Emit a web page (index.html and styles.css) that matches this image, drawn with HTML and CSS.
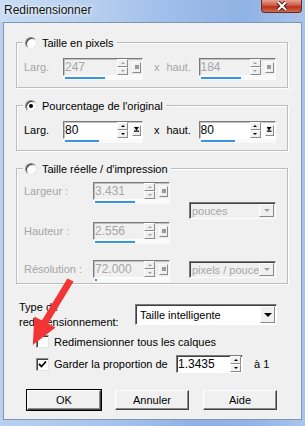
FILE: index.html
```html
<!DOCTYPE html>
<html lang="fr">
<head>
  <meta charset="UTF-8">
  <meta name="viewport" content="width=device-width, initial-scale=1">
  <title>Redimensionner</title>
  <link rel="stylesheet" href="styles.css">
</head>
<body>

<div class="window">
  <div class="titlebar">
    <span class="title">Redimensionner</span>
    <span class="close">
      <svg width="14" height="10" viewBox="0 0 14 10">
        <path d="M3 1 L11 9 M11 1 L3 9" stroke="#4a1a1a" stroke-width="4"/>
        <path d="M3 1 L11 9 M11 1 L3 9" stroke="#fff" stroke-width="2"/>
      </svg>
    </span>
  </div>

  <div class="client">

    <div class="group off">
      <div class="legend"><span class="radio"></span>Taille en pixels</div>
      <div class="row">
        <span class="lbl">Larg.</span>
        <div class="numedit">
          <div class="ne-box">
            <span class="ne-val">247</span>
            <span class="spin"><span class="up"></span><span class="dn"></span></span>
            <span class="pop"></span>
          </div>
          <div class="ne-bar"><span class="fill" style="width:40px"></span></div>
        </div>
        <span class="times">x</span>
        <span class="lbl2">haut.</span>
        <div class="numedit short">
          <div class="ne-box">
            <span class="ne-val">184</span>
            <span class="spin"><span class="up"></span><span class="dn"></span></span>
            <span class="pop"></span>
          </div>
          <div class="ne-bar"><span class="fill" style="width:40px"></span></div>
        </div>
      </div>
    </div>

    <div class="group">
      <div class="legend"><span class="radio on"></span>Pourcentage de l'original</div>
      <div class="row">
        <span class="lbl">Larg.</span>
        <div class="numedit">
          <div class="ne-box">
            <span class="ne-val">80</span>
            <span class="spin"><span class="up"></span><span class="dn"></span></span>
            <span class="pop"></span>
          </div>
          <div class="ne-bar"><span class="fill" style="width:34px"></span></div>
        </div>
        <span class="times">x</span>
        <span class="lbl2">haut.</span>
        <div class="numedit short">
          <div class="ne-box">
            <span class="ne-val">80</span>
            <span class="spin"><span class="up"></span><span class="dn"></span></span>
            <span class="pop"></span>
          </div>
          <div class="ne-bar"><span class="fill" style="width:34px"></span></div>
        </div>
      </div>
    </div>

    <div class="group off last">
      <div class="legend"><span class="radio"></span>Taille réelle / d'impression</div>
      <div class="grid">
        <span class="lbl r1">Largeur :</span>
        <div class="numedit mid r1">
          <div class="ne-box">
            <span class="ne-val">3.431</span>
            <span class="spin"><span class="up"></span><span class="dn"></span></span>
            <span class="pop"></span>
          </div>
          <div class="ne-bar"><span class="fill" style="width:40px"></span></div>
        </div>
        <div class="combo r2">
          <span class="combo-val">pouces</span>
          <span class="combo-btn"><span class="tri"></span></span>
        </div>
        <span class="lbl r3">Hauteur :</span>
        <div class="numedit mid r3">
          <div class="ne-box">
            <span class="ne-val">2.556</span>
            <span class="spin"><span class="up"></span><span class="dn"></span></span>
            <span class="pop"></span>
          </div>
          <div class="ne-bar"><span class="fill" style="width:40px"></span></div>
        </div>
        <span class="lbl r4">Résolution :</span>
        <div class="numedit mid r4">
          <div class="ne-box">
            <span class="ne-val">72.000</span>
            <span class="spin"><span class="up"></span><span class="dn"></span></span>
            <span class="pop"></span>
          </div>
          <div class="ne-bar"><span class="fill" style="width:2px"></span></div>
        </div>
        <div class="combo r4">
          <span class="combo-val">pixels / pouce</span>
          <span class="combo-btn"><span class="tri"></span></span>
        </div>
      </div>
    </div>

    <div class="type-row">
      <span class="type-lbl">Type de redimensionnement:</span>
      <div class="combo big">
        <span class="combo-val">Taille intelligente</span>
        <span class="combo-btn"><span class="tri"></span></span>
      </div>
    </div>

    <div class="check-row">
      <span class="check"></span>
      <span>Redimensionner tous les calques</span>
    </div>

    <div class="check-row ratio">
      <span class="check">
        <svg width="9" height="9" viewBox="0 0 9 9"><path d="M1 4 L3.5 6.5 L8 1.5" fill="none" stroke="#000" stroke-width="1.8"/></svg>
      </span>
      <span class="ratio-lbl">Garder la proportion de</span>
      <div class="ratio-box">
        <span class="ne-val">1.3435</span>
        <span class="spin"><span class="up"></span><span class="dn"></span></span>
      </div>
      <span class="ratio-end">à 1</span>
    </div>

    <div class="buttons">
      <span class="btn default">OK</span>
      <span class="btn">Annuler</span>
      <span class="btn">Aide</span>
    </div>

  </div>

  <svg class="arrow" width="52" height="74" viewBox="25 278 52 74">
    <polygon points="67.4,278.4 73.6,281.6 48.1,323.6 55.6,327.6 32.8,344.9 34.4,316.4 41.9,320.4" fill="#f23434"/>
  </svg>
</div>

</body>
</html>
```

FILE: styles.css
```css
* {
  box-sizing: border-box;
}
body {
  margin: 0;
  width: 305px;
  height: 426px;
  overflow: hidden;
  font-family: "Liberation Sans", Arial, sans-serif;
  font-size: 11px;
  color: #000;
}
.window {
  position: relative;
  width: 305px;
  height: 426px;
  display: flex;
  flex-direction: column;
  padding: 0 3px 6px 3px;
  background: linear-gradient(90deg, #b9d0ef 0%, #a8c4eb 35%, #8fb1e3 65%, #94b6e6 85%, #a9c5ec 100%);
}
.titlebar {
  height: 22px;
  display: flex;
  align-items: flex-start;
  background: linear-gradient(90deg, #c9dcf4 0%, #b7cfef 30%, #9bbbe8 60%, #90b2e4 80%, #a8c4ea 100%);
  margin: 0 -3px;
  padding: 0 3px;
}
.title {
  font-size: 12px;
  line-height: 14px;
  margin: 3px 0 0 1px;
  color: #111;
  text-shadow: 0 0 5px #eef4fc, 0 0 3px #eef4fc;
}
.close {
  margin-left: auto;
  width: 41px;
  height: 13px;
  display: flex;
  align-items: center;
  justify-content: center;
  border: 1px solid #6d2a24;
  border-top: none;
  border-radius: 0 0 4px 4px;
  background: linear-gradient(180deg, #e3a394 0%, #cf5a43 45%, #b8321c 55%, #cf6a4c 100%);
}
.client {
  flex: 1;
  background: #f0f0f0;
  border: 1px solid #7f95b4;
  padding: 0 13px 0 12px;
}

/* group boxes */
.group {
  width: 272px;
  margin-top: 17px;
  border: 1px solid #bcbcbc;
  box-shadow: inset 1px 1px 0 #fff, 1px 1px 0 #fff;
  padding-bottom: 7px;
}
.group:first-child {
  margin-top: 19px;
}
.group.last {
  padding-bottom: 0;
}
.legend {
  display: flex;
  align-items: center;
  width: fit-content;
  height: 15px;
  margin: -8px 0 0 6px;
  padding: 0 3px 0 2px;
  background: #f0f0f0;
}
.radio {
  width: 12px;
  height: 12px;
  margin-right: 5px;
  border-radius: 50%;
  background: #fff;
  border: 1px solid;
  border-color: #8a8a8a #e6e6e6 #e6e6e6 #8a8a8a;
  box-shadow: inset 1px 1px 0 #3c3c3c;
  display: flex;
  align-items: center;
  justify-content: center;
}
.radio.on::after {
  content: "";
  width: 4px;
  height: 4px;
  border-radius: 50%;
  background: #000;
}
.row {
  display: flex;
  align-items: flex-start;
  margin: 8px 0 0 7px;
  height: 22px;
}
.lbl {
  width: 39px;
  line-height: 18px;
}
.times {
  line-height: 18px;
  margin: 0 7px 0 11px;
}
.lbl2 {
  width: 32px;
  line-height: 18px;
}
.off .lbl,
.off .lbl2,
.off .times,
.off .ne-val,
.off .combo-val {
  color: #a6a6a6;
}

/* numeric edit with slider */
.numedit {
  width: 80px;
}
.numedit.short {
  width: 77px;
}
.numedit.mid {
  width: 77px;
}
.ne-box {
  height: 18px;
  display: flex;
  align-items: center;
  background: #fff;
  border: 1px solid;
  border-color: #7a7a7a #fff #fff #7a7a7a;
  box-shadow: inset 1px 1px 0 #c0c0c0;
}
.off .ne-box {
  background: #f0f0f0;
}
.ne-val {
  flex: 1;
  font-size: 12px;
  padding-left: 1px;
}
.spin {
  width: 11px;
  height: 16px;
  display: flex;
  flex-direction: column;
}
.spin span {
  flex: 1;
  display: flex;
  align-items: center;
  justify-content: center;
  background: #f0f0f0;
  border: 1px solid;
  border-color: #fff #8a8a8a #8a8a8a #fff;
}
.spin .up::after {
  content: "";
  border-left: 2px solid transparent;
  border-right: 2px solid transparent;
  border-bottom: 2px solid #000;
}
.spin .dn::after {
  content: "";
  border-left: 2px solid transparent;
  border-right: 2px solid transparent;
  border-top: 2px solid #000;
}
.off .spin .up::after {
  border-bottom-color: #a0a0a0;
}
.off .spin .dn::after {
  border-top-color: #a0a0a0;
}
.pop {
  width: 9px;
  height: 11px;
  margin: 0 1px 0 4px;
  display: flex;
  align-items: center;
  justify-content: center;
  background: #f0f0f0;
  border: 1px solid;
  border-color: #fff #8a8a8a #8a8a8a #fff;
}
.pop::after {
  content: "";
  width: 5px;
  height: 6px;
  background: #000;
  clip-path: polygon(0 0, 100% 0, 50% 60%, 100% 60%, 100% 80%, 0 80%, 0 60%, 50% 60%);
}
.off .pop::after {
  width: 4px;
  height: 4px;
  background: #9a9a9a;
  clip-path: none;
}
.ne-bar {
  height: 4px;
  background: #fafafa;
  padding: 1px 0 0 2px;
}
.fill {
  display: block;
  height: 2px;
  background: #3b93e6;
}

/* real size grid */
.grid {
  display: grid;
  grid-template-columns: 69px 77px 19px 87px;
  grid-template-rows: 20px 20px 38px 23px;
  margin: 6px 0 0 7px;
}
.grid .lbl {
  width: auto;
}
.r1 { grid-row: 1; }
.r2 { grid-row: 2; grid-column: 4; }
.r3 { grid-row: 3; }
.r4 { grid-row: 4; }
.grid .combo.r4 {
  grid-column: 4;
  margin-top: 1px;
}

/* combo boxes */
.combo {
  width: 87px;
  height: 17px;
  display: flex;
  align-items: center;
  border: 1px solid;
  border-color: #7a7a7a #fff #fff #7a7a7a;
  box-shadow: inset 1px 1px 0 #404040;
  background: #f0f0f0;
}
.combo-val {
  flex: 1;
  overflow: hidden;
  white-space: nowrap;
  padding-left: 2px;
}
.combo-btn {
  width: 15px;
  height: 13px;
  margin-right: 1px;
  display: flex;
  align-items: center;
  justify-content: center;
  background: #f0f0f0;
  border: 1px solid;
  border-color: #fff #8a8a8a #8a8a8a #fff;
}
.tri {
  border-left: 3px solid transparent;
  border-right: 3px solid transparent;
  border-top: 3px solid #a0a0a0;
}

/* resize type */
.type-row {
  display: flex;
  align-items: flex-start;
  margin: 16px 0 0 3px;
}
.type-lbl {
  width: 116px;
  line-height: 15px;
}
.combo.big {
  width: 142px;
  height: 21px;
  margin-top: 4px;
  background: #fff;
}
.big .combo-val {
  padding-left: 4px;
}
.big .combo-btn {
  height: 17px;
}
.big .tri {
  border-left-width: 4px;
  border-right-width: 4px;
  border-top: 4px solid #000;
}

/* check boxes */
.check-row {
  display: flex;
  align-items: center;
  margin: 5px 0 0 20px;
  height: 13px;
}
.check {
  width: 13px;
  height: 13px;
  margin-right: 5px;
  background: #fff;
  border: 1px solid;
  border-color: #8a8a8a #e6e6e6 #e6e6e6 #8a8a8a;
  box-shadow: inset 1px 1px 0 #404040;
  display: flex;
  align-items: center;
  justify-content: center;
}
.check-row.ratio {
  height: 18px;
  margin-top: 7px;
}
.ratio-lbl {
  width: 122px;
}
.ratio-box {
  width: 67px;
  height: 18px;
  display: flex;
  align-items: center;
  background: #fff;
  border: 1px solid;
  border-color: #7a7a7a #fff #fff #7a7a7a;
  box-shadow: inset 1px 1px 0 #404040;
}
.ratio-box .spin {
  margin-right: 1px;
}
.ratio-end {
  margin-left: 11px;
}

/* buttons */
.buttons {
  display: flex;
  gap: 14px;
  margin: 17px 0 0 11px;
}
.btn {
  width: 74px;
  height: 20px;
  display: flex;
  align-items: center;
  justify-content: center;
  background: #f0f0f0;
  border: 1px solid;
  border-color: #fff #404040 #404040 #fff;
  box-shadow: inset -1px -1px 0 #8a8a8a;
}
.btn.default {
  outline: 1px solid #000;
}

.arrow {
  position: absolute;
  left: 25px;
  top: 278px;
}
```
